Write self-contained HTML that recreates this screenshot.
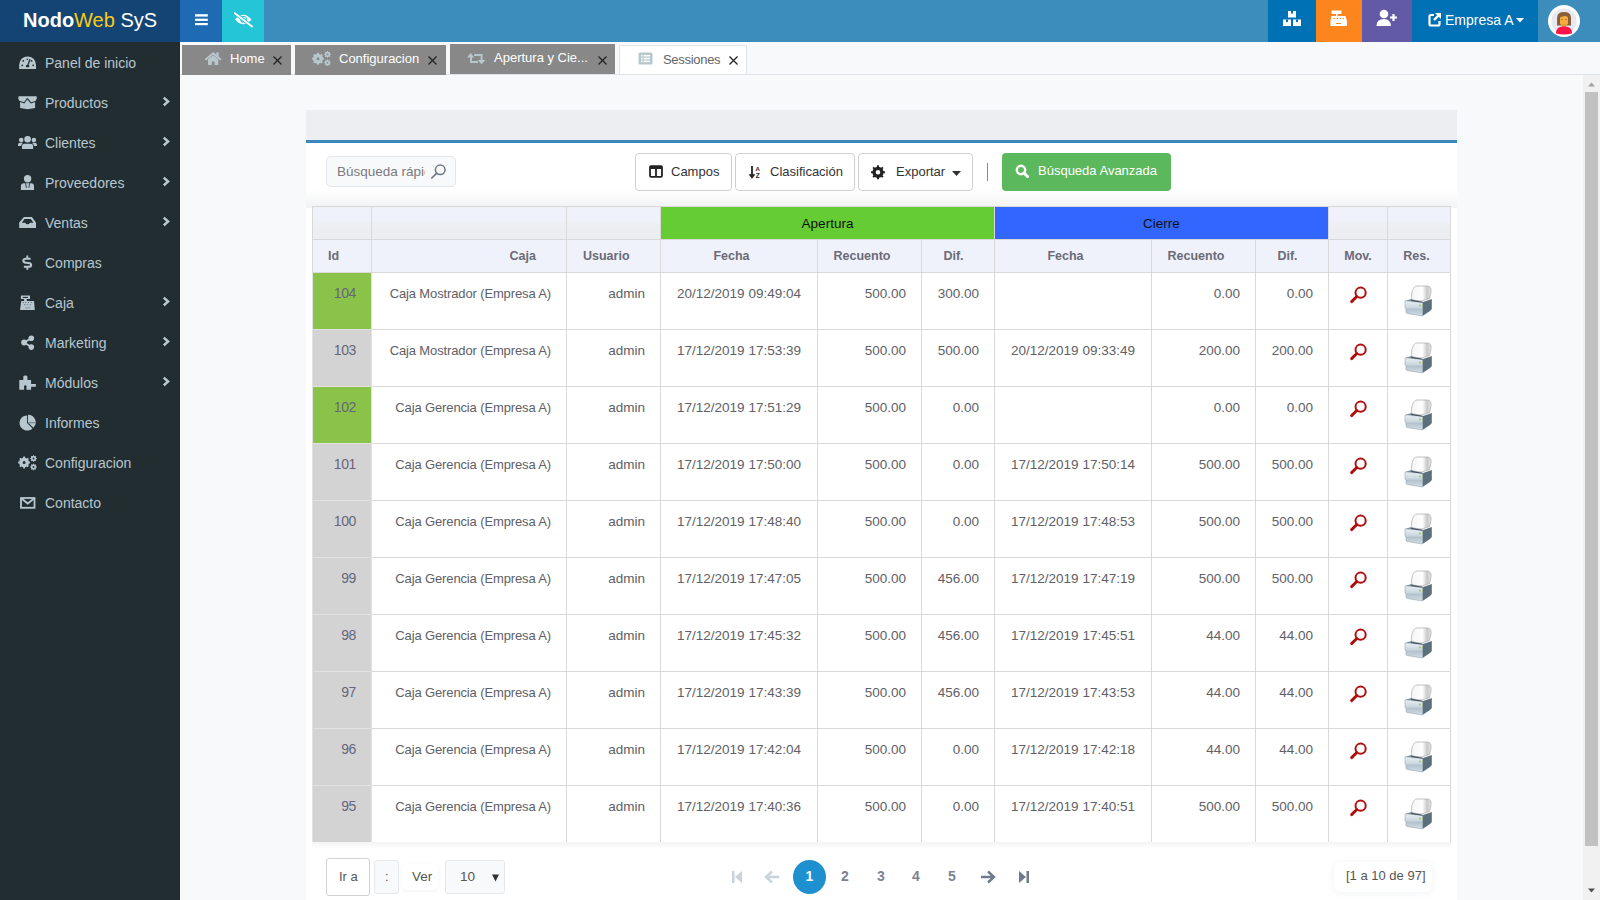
<!DOCTYPE html>
<html><head><meta charset="utf-8">
<style>
*{box-sizing:border-box;margin:0;padding:0}
html,body{width:1600px;height:900px;overflow:hidden;background:#f8f9fb;font-family:"Liberation Sans",sans-serif}
.abs{position:absolute}
#logo{left:0;top:0;width:180px;height:42px;background:#134473;color:#fff;font-size:20px;line-height:40px;padding-left:23px;white-space:nowrap}
#logo b{font-weight:bold}
#logo .w{color:#f9cb13}
#side{left:0;top:42px;width:180px;height:858px;background:#222d32}
.mi{position:absolute;left:0;width:180px;height:40px;color:#b8c7ce;font-size:14px}
.mi span{position:absolute;left:45px;top:13px;line-height:16px}
.mi svg.i{position:absolute;left:17px;top:12px}
.mi .ch{position:absolute;left:162px;top:14px}
#nav{left:180px;top:0;width:1420px;height:42px;background:#3c8dbc}
.nb{position:absolute;top:0;height:42px}
#tabs{left:180px;top:42px;width:1420px;height:33px;background:#f8f9fb;z-index:2}
.tab{position:absolute;height:30px;top:3px;background:#888;color:#fff;font-size:13px}
.tab span{position:absolute;top:6px;line-height:16px;white-space:nowrap}
.tab .x{position:absolute;top:11px}
#content{left:180px;top:74px;width:1420px;height:826px;background:#f8f9fb;border-top:1px solid #dde3ea}
#sb{left:1583px;top:75px;width:17px;height:825px;background:#f1f1f1}
#panel{left:306px;top:110px;width:1151px;height:790px;background:#fff}
#phead{left:0;top:0;width:1151px;height:33px;background:#eceef2;border-bottom:3px solid #3a89bd}
table{position:absolute;left:6px;top:96px;border-collapse:collapse;table-layout:fixed;font-size:13.5px;color:#606066}
td,th{border:1px solid #d9d9d9;padding:0}
th{height:33px;background:#eff2fa;color:#6b6b78;font-weight:bold;font-size:12.5px}
td{height:57px;vertical-align:top;padding-top:12.5px;line-height:16px;white-space:nowrap}
td.r{text-align:right;padding-right:15px}
td.caja{font-size:13px;letter-spacing:-0.13px}
td.c{text-align:center}
tr.h1 th{background:linear-gradient(to bottom,#eff2fa 0,#eff2fa 40%,#eceef2 60%,#eceef2 100%)}
td.id{text-align:right;padding-right:15px;color:#66667a;border-color:#e2e2e2;padding-top:11.5px;font-size:14px;letter-spacing:-0.4px}
td.ic{text-align:center;padding-top:12px}
.btn{position:absolute;top:43px;height:38px;border:1px solid #cfcfcf;border-radius:4px;background:#fff;color:#333;font-size:13px}
.btn span{position:absolute;top:10px;line-height:16px;white-space:nowrap}
</style></head><body>

<div id="logo" class="abs"><b>Nodo</b><span class="w">Web</span> SyS</div>
<div id="side" class="abs">
  <div class="mi" style="top:0"><svg class="i" width="20" height="18" viewBox="0 0 20 18"><path d="M2.2 15 L2.2 10.8 A8.4 8.4 0 0 1 19 10.8 L19 15 Z" fill="#b8c7ce"/><circle cx="6.3" cy="6.9" r="0.9" fill="#222d32"/><circle cx="10.3" cy="5.3" r="0.8" fill="#222d32"/><circle cx="14.6" cy="6.9" r="0.9" fill="#222d32"/><circle cx="5.3" cy="11.3" r="0.9" fill="#222d32"/><circle cx="16.2" cy="11.3" r="0.9" fill="#222d32"/><path d="M10.6 12 L13 5.2" stroke="#222d32" stroke-width="1.3"/><rect x="9" y="11" width="3.2" height="2.2" fill="#222d32"/></svg><span>Panel de inicio</span></div>
  <div class="mi" style="top:40px"><svg class="i" width="20" height="18" viewBox="0 0 20 18"><path d="M1.6 2.3 L19.6 2.3 L19.9 4.2 L18.5 7 L14.1 8.3 L10.3 3.7 L7.1 8.3 L2.2 6.8 L1.3 4.5 Z" fill="#b8c7ce"/><path d="M3 7.9 L7.3 9.4 L10.3 5.6 L13.9 9.4 L18.1 7.9 L18.1 14 L10.6 15.2 L3.2 14 Z" fill="#b8c7ce"/></svg><span>Productos</span><svg class="ch" width="8" height="11" viewBox="0 0 8 11"><path d="M1.8 1.6 L6 5.5 L1.8 9.4" fill="none" stroke="#b8c7ce" stroke-width="2.6"/></svg></div>
  <div class="mi" style="top:80px"><svg class="i" width="20" height="18" viewBox="0 0 20 18"><circle cx="10.6" cy="5.3" r="3.3" fill="#b8c7ce"/><circle cx="4.2" cy="6" r="2.3" fill="#b8c7ce"/><circle cx="16.9" cy="6" r="2.3" fill="#b8c7ce"/><path d="M5 14.9 L5 12 Q5 9.7 7.5 9.7 L13.6 9.7 Q16.1 9.7 16.1 12 L16.1 14.9 Z" fill="#b8c7ce"/><path d="M1 12 L1 10.5 Q1 8.8 3 8.8 L6 8.8 Q4.2 10 4.2 12 Z" fill="#b8c7ce"/><path d="M19.9 12 L19.9 10.5 Q19.9 8.8 17.9 8.8 L15.1 8.8 Q16.9 10 16.9 12 Z" fill="#b8c7ce"/></svg><span>Clientes</span><svg class="ch" width="8" height="11" viewBox="0 0 8 11"><path d="M1.8 1.6 L6 5.5 L1.8 9.4" fill="none" stroke="#b8c7ce" stroke-width="2.6"/></svg></div>
  <div class="mi" style="top:120px"><svg class="i" width="20" height="18" viewBox="0 0 20 18"><circle cx="10.6" cy="4.8" r="3.7" fill="#b8c7ce"/><path d="M3.9 16 L3.9 12.5 Q3.9 9.3 7 9.3 L14 9.3 Q17 9.3 17 12.5 L17 16 Z" fill="#b8c7ce"/><path d="M8.6 9.2 L9.4 13.8 M12.6 9.2 L11.8 13.8" stroke="#222d32" stroke-width="0.9"/></svg><span>Proveedores</span><svg class="ch" width="8" height="11" viewBox="0 0 8 11"><path d="M1.8 1.6 L6 5.5 L1.8 9.4" fill="none" stroke="#b8c7ce" stroke-width="2.6"/></svg></div>
  <div class="mi" style="top:160px"><svg class="i" width="20" height="18" viewBox="0 0 20 18"><path d="M6.9 2.9 L14.9 2.9 L19 8.5 L19 14.1 L2.2 14.1 L2.2 8.5 Z" fill="#b8c7ce"/><path d="M7.5 5.1 L13.8 5.1 L16.4 8.8 L13 8.8 Q12.2 10.3 10.6 10.3 Q9 10.3 8.2 8.8 L4.8 8.8 Z" fill="#222d32"/></svg><span>Ventas</span><svg class="ch" width="8" height="11" viewBox="0 0 8 11"><path d="M1.8 1.6 L6 5.5 L1.8 9.4" fill="none" stroke="#b8c7ce" stroke-width="2.6"/></svg></div>
  <div class="mi" style="top:200px"><svg class="i" width="20" height="18" viewBox="0 0 20 18"><path d="M13.6 4.7 L9 4.7 Q6.4 4.7 6.4 6.7 Q6.4 8.4 9 8.7 L11.5 9 Q14.1 9.3 14.1 11 Q14.1 12.8 11.5 12.8 L6.9 12.8" fill="none" stroke="#b8c7ce" stroke-width="2.1"/><path d="M10.3 1.5 L10.3 4.7 M10.3 12.8 L10.3 15.8" stroke="#b8c7ce" stroke-width="1.9"/></svg><span>Compras</span></div>
  <div class="mi" style="top:240px"><svg class="i" width="20" height="18" viewBox="0 0 20 18"><rect x="3.9" y="1.6" width="9.1" height="3.5" rx="0.5" fill="#b8c7ce"/><rect x="5.8" y="2.9" width="5.1" height="1.1" fill="#222d32"/><rect x="7.1" y="5" width="2.7" height="2" fill="#b8c7ce"/><path d="M4.2 6.9 L17 6.9 L17.8 16 L3.1 16 Z" fill="#b8c7ce"/><g fill="#5d6b72"><rect x="5.8" y="8" width="1" height="1"/><rect x="8.2" y="8" width="1" height="1"/><rect x="10.9" y="8" width="1" height="1"/><rect x="13.8" y="8" width="1" height="1"/><rect x="7.2" y="10.2" width="1" height="1"/><rect x="9.8" y="10.2" width="1" height="1"/><rect x="12.8" y="10.2" width="1" height="1"/></g><rect x="8.2" y="13.4" width="5.1" height="1.1" fill="#8c9ba3"/></svg><span>Caja</span><svg class="ch" width="8" height="11" viewBox="0 0 8 11"><path d="M1.8 1.6 L6 5.5 L1.8 9.4" fill="none" stroke="#b8c7ce" stroke-width="2.6"/></svg></div>
  <div class="mi" style="top:280px"><svg class="i" width="20" height="18" viewBox="0 0 20 18"><circle cx="7.1" cy="8.5" r="2.9" fill="#b8c7ce"/><circle cx="14.3" cy="4.3" r="2.8" fill="#b8c7ce"/><circle cx="14.3" cy="13.1" r="2.8" fill="#b8c7ce"/><path d="M7.1 8.5 L14.3 4.3 M7.1 8.5 L14.3 13.1" stroke="#b8c7ce" stroke-width="1.8"/></svg><span>Marketing</span><svg class="ch" width="8" height="11" viewBox="0 0 8 11"><path d="M1.8 1.6 L6 5.5 L1.8 9.4" fill="none" stroke="#b8c7ce" stroke-width="2.6"/></svg></div>
  <div class="mi" style="top:320px"><svg class="i" width="20" height="18" viewBox="0 0 20 18"><path d="M2.3 5.9 L6.3 5.9 L6.3 2.8 Q6.3 1.5 8.35 1.5 Q10.4 1.5 10.4 2.8 L10.4 5.9 L14.1 5.9 L14.1 9.9 L18.9 9.9 L18.9 12.8 L14.1 12.8 L14.1 15.7 L9.5 15.7 L9.5 12.3 Q9.5 11.2 8.3 11.2 Q7.1 11.2 7.1 12.3 L7.1 15.7 L2.3 15.7 Z" fill="#b8c7ce"/></svg><span>Módulos</span><svg class="ch" width="8" height="11" viewBox="0 0 8 11"><path d="M1.8 1.6 L6 5.5 L1.8 9.4" fill="none" stroke="#b8c7ce" stroke-width="2.6"/></svg></div>
  <div class="mi" style="top:360px"><svg class="i" width="20" height="18" viewBox="0 0 20 18"><path d="M10.1 9 L10.1 1.4 A7.6 7.6 0 1 0 15.5 14.4 Z" fill="#b8c7ce"/><path d="M11 8.4 L11 0.8 A7.6 7.6 0 0 1 16.4 13.8 Z" fill="#b8c7ce"/><rect x="11" y="8.1" width="7.6" height="1.2" fill="#7a8792"/></svg><span>Informes</span></div>
  <div class="mi" style="top:400px"><svg style="position:absolute;left:17px;top:12px" width="20" height="18" viewBox="0 0 20 18"><path fill-rule="evenodd" fill="#b8c7ce" d="M11.63 6.62 L11.91 7.54 L13.03 7.61 L13.03 9.39 L11.91 9.46 L11.63 10.38 L11.17 11.22 L11.93 12.06 L10.66 13.33 L9.82 12.57 L8.98 13.03 L8.06 13.31 L7.99 14.43 L6.21 14.43 L6.14 13.31 L5.22 13.03 L4.38 12.57 L3.54 13.33 L2.27 12.06 L3.03 11.22 L2.57 10.38 L2.29 9.46 L1.17 9.39 L1.17 7.61 L2.29 7.54 L2.57 6.62 L3.03 5.78 L2.27 4.94 L3.54 3.67 L4.38 4.43 L5.22 3.97 L6.14 3.69 L6.21 2.57 L7.99 2.57 L8.06 3.69 L8.98 3.97 L9.82 4.43 L10.66 3.67 L11.93 4.94 L11.17 5.78 Z M5.60 8.50 a1.5 1.5 0 1 0 3.0 0 a1.5 1.5 0 1 0 -3.0 0 Z M18.90 3.51 L19.05 3.99 L19.86 3.99 L19.86 5.01 L19.05 5.01 L18.90 5.49 L18.66 5.94 L19.23 6.52 L18.52 7.23 L17.94 6.66 L17.49 6.90 L17.01 7.05 L17.01 7.86 L15.99 7.86 L15.99 7.05 L15.51 6.90 L15.06 6.66 L14.48 7.23 L13.77 6.52 L14.34 5.94 L14.10 5.49 L13.95 5.01 L13.14 5.01 L13.14 3.99 L13.95 3.99 L14.10 3.51 L14.34 3.06 L13.77 2.48 L14.48 1.77 L15.06 2.34 L15.51 2.10 L15.99 1.95 L15.99 1.14 L17.01 1.14 L17.01 1.95 L17.49 2.10 L17.94 2.34 L18.52 1.77 L19.23 2.48 L18.66 3.06 Z M15.60 4.50 a0.9 0.9 0 1 0 1.8 0 a0.9 0.9 0 1 0 -1.8 0 Z M18.90 12.01 L19.05 12.49 L19.86 12.49 L19.86 13.51 L19.05 13.51 L18.90 13.99 L18.66 14.44 L19.23 15.02 L18.52 15.73 L17.94 15.16 L17.49 15.40 L17.01 15.55 L17.01 16.36 L15.99 16.36 L15.99 15.55 L15.51 15.40 L15.06 15.16 L14.48 15.73 L13.77 15.02 L14.34 14.44 L14.10 13.99 L13.95 13.51 L13.14 13.51 L13.14 12.49 L13.95 12.49 L14.10 12.01 L14.34 11.56 L13.77 10.98 L14.48 10.27 L15.06 10.84 L15.51 10.60 L15.99 10.45 L15.99 9.64 L17.01 9.64 L17.01 10.45 L17.49 10.60 L17.94 10.84 L18.52 10.27 L19.23 10.98 L18.66 11.56 Z M15.60 13.00 a0.9 0.9 0 1 0 1.8 0 a0.9 0.9 0 1 0 -1.8 0 Z"/></svg><span>Configuracion</span></div>
  <div class="mi" style="top:440px"><svg class="i" width="20" height="18" viewBox="0 0 20 18"><rect x="4" y="4" width="13.5" height="9.8" fill="none" stroke="#b8c7ce" stroke-width="1.8"/><path d="M4.5 4.5 L10.75 9.5 L17 4.5" fill="none" stroke="#b8c7ce" stroke-width="1.8"/></svg><span>Contacto</span></div>
</div>

<div id="nav" class="abs">
  <div class="nb" style="left:0;width:42px;background:#1e6bb4"><svg style="position:absolute;left:14px;top:13px" width="15" height="14" viewBox="0 0 15 14"><rect x="1" y="1.2" width="12.8" height="2.4" fill="#fff"/><rect x="1" y="5.7" width="12.8" height="2.2" fill="#fff"/><rect x="1" y="10" width="12.8" height="2.2" fill="#fff"/></svg></div>
  <div class="nb" style="left:42px;width:42px;background:#25c5d8"><svg style="position:absolute;left:12px;top:12px" width="19" height="16" viewBox="0 0 19 16"><path d="M1 7.5 Q9.2 -2 17.5 7.5 Q9.2 17 1 7.5 Z" fill="#fff"/><circle cx="9.6" cy="7.3" r="3.4" fill="#25c5d8"/><circle cx="10.2" cy="7" r="1.9" fill="#fff"/><path d="M0.8 1 L18 14.6" stroke="#25c5d8" stroke-width="3.6"/><path d="M0.8 1.2 L18 14.4" stroke="#fff" stroke-width="1.9" stroke-linecap="round"/></svg></div>
  <div class="nb" style="left:1088px;width:48px;background:#0071b5"><svg style="position:absolute;left:14px;top:10px" width="20" height="17" viewBox="0 0 20 17"><rect x="6" y="1" width="8" height="6.5" fill="#fff"/><rect x="1" y="9.5" width="8" height="6.5" fill="#fff"/><rect x="11" y="9.5" width="8" height="6.5" fill="#fff"/><rect x="9" y="1" width="2" height="2.5" fill="#0071b5"/><rect x="4" y="9.5" width="2" height="2.5" fill="#0071b5"/><rect x="14" y="9.5" width="2" height="2.5" fill="#0071b5"/></svg></div>
  <div class="nb" style="left:1136px;width:46px;background:#fd851d"><svg style="position:absolute;left:14px;top:10px" width="18" height="17" viewBox="0 0 18 17"><rect x="1.5" y="0.5" width="10" height="3.5" fill="#fff"/><rect x="6" y="4" width="1.5" height="2.5" fill="#fff"/><path d="M1.5 6 L15.5 6 L17 11 L17 16 L0.5 16 L0.5 11 Z" fill="#fff"/><rect x="3.5" y="8" width="1.5" height="1" fill="#fd851d"/><rect x="6.5" y="8" width="1.5" height="1" fill="#fd851d"/><rect x="9.5" y="8" width="1.5" height="1" fill="#fd851d"/><rect x="12.5" y="8" width="1.5" height="1" fill="#fd851d"/><rect x="6" y="13" width="5" height="1" fill="#fd851d"/></svg></div>
  <div class="nb" style="left:1182px;width:50px;background:#625aa6"><svg style="position:absolute;left:14px;top:9px" width="22" height="18" viewBox="0 0 22 18"><circle cx="8" cy="5" r="4.3" fill="#fff"/><path d="M0.5 17 Q0.5 10 8 10 Q14.5 10 15 17 Z" fill="#fff"/><path d="M17.5 5 L17.5 12 M14 8.5 L21 8.5" stroke="#fff" stroke-width="2.2"/></svg></div>
  <div class="nb" style="left:1232px;width:126px;background:#0071b5;color:#fff;font-size:14px"><svg style="position:absolute;left:16px;top:12px" width="14" height="15" viewBox="0 0 14 15"><path d="M6 3 L3 3 Q1.5 3 1.5 4.5 L1.5 12 Q1.5 13.5 3 13.5 L10 13.5 Q11.5 13.5 11.5 12 L11.5 9" fill="none" stroke="#fff" stroke-width="2.2"/><path d="M7 1 L13 1 L13 7 Z" fill="#fff"/><path d="M6 8 L11 3" stroke="#fff" stroke-width="2.4"/></svg><span style="position:absolute;left:33px;top:11.5px;line-height:17px">Empresa A</span><svg style="position:absolute;left:104px;top:18px" width="8" height="5" viewBox="0 0 8 5"><path d="M0 0 L8 0 L4 4.5 Z" fill="#fff"/></svg></div>
  <div class="nb" style="left:1368px;top:5px;width:32px;height:32px;border-radius:50%;background:#fff"><svg style="position:absolute;left:0;top:0" width="32" height="32" viewBox="0 0 32 32"><circle cx="16" cy="16" r="12.6" fill="#e8e9ee"/><path d="M9.1 20.6 L9.1 13 Q9.1 7.1 16 7.1 Q23 7.1 23 13 L23 20.6 Z" fill="#8a5d3b"/><path d="M12 12.5 Q14 11 17 10.9 Q19.5 11 20 12.5 L20 18 Q20 20.3 16 20.3 Q12 20.3 12 18 Z" fill="#f4ac3c"/><rect x="14.2" y="19.5" width="3.6" height="3" fill="#e6962e"/><circle cx="13.9" cy="14.6" r="0.7" fill="#b0603a"/><circle cx="18.1" cy="14.6" r="0.7" fill="#b0603a"/><path d="M8 28.6 Q8 22 14 21.5 L18 21.5 Q24 22 24 28.6 Q16 30.5 8 28.6 Z" fill="#ff1447"/></svg></div>
</div>

<div id="tabs" class="abs" style="height:32px">
  <div class="tab" style="left:2px;width:109px"><svg style="position:absolute;left:23px;top:7px" width="17" height="14" viewBox="0 0 17 14"><path d="M1 7.3 L8.2 1.3 L15.3 7.3" fill="none" stroke="#b8c7ce" stroke-width="1.9" stroke-linecap="round"/><path d="M3 7.3 L8.2 3.2 L13.3 7.3 L13.3 13 L9.6 13 L9.6 9.6 L6.8 9.6 L6.8 13 L3 13 Z" fill="#b8c7ce"/><rect x="11.3" y="0.4" width="2.3" height="4.5" fill="#b8c7ce"/></svg><span style="left:48px">Home</span><svg class="x" style="left:91px" width="9" height="9" viewBox="0 0 9 9"><path d="M0.5 0.5 L8.5 8.5 M8.5 0.5 L0.5 8.5" stroke="#222" stroke-width="1.3"/></svg></div>
  <div class="tab" style="left:115px;width:151px"><svg style="position:absolute;left:16px;top:5px" width="20" height="16" viewBox="0 0 20 16"><path fill-rule="evenodd" fill="#b8c7ce" d="M11.53 6.82 L11.81 7.74 L12.93 7.81 L12.93 9.59 L11.81 9.66 L11.53 10.58 L11.07 11.42 L11.83 12.26 L10.56 13.53 L9.72 12.77 L8.88 13.23 L7.96 13.51 L7.89 14.63 L6.11 14.63 L6.04 13.51 L5.12 13.23 L4.28 12.77 L3.44 13.53 L2.17 12.26 L2.93 11.42 L2.47 10.58 L2.19 9.66 L1.07 9.59 L1.07 7.81 L2.19 7.74 L2.47 6.82 L2.93 5.98 L2.17 5.14 L3.44 3.87 L4.28 4.63 L5.12 4.17 L6.04 3.89 L6.11 2.77 L7.89 2.77 L7.96 3.89 L8.88 4.17 L9.72 4.63 L10.56 3.87 L11.83 5.14 L11.07 5.98 Z M5.50 8.70 a1.5 1.5 0 1 0 3.0 0 a1.5 1.5 0 1 0 -3.0 0 Z M18.90 3.41 L19.05 3.89 L19.86 3.89 L19.86 4.91 L19.05 4.91 L18.90 5.39 L18.66 5.84 L19.23 6.42 L18.52 7.13 L17.94 6.56 L17.49 6.80 L17.01 6.95 L17.01 7.76 L15.99 7.76 L15.99 6.95 L15.51 6.80 L15.06 6.56 L14.48 7.13 L13.77 6.42 L14.34 5.84 L14.10 5.39 L13.95 4.91 L13.14 4.91 L13.14 3.89 L13.95 3.89 L14.10 3.41 L14.34 2.96 L13.77 2.38 L14.48 1.67 L15.06 2.24 L15.51 2.00 L15.99 1.85 L15.99 1.04 L17.01 1.04 L17.01 1.85 L17.49 2.00 L17.94 2.24 L18.52 1.67 L19.23 2.38 L18.66 2.96 Z M15.60 4.40 a0.9 0.9 0 1 0 1.8 0 a0.9 0.9 0 1 0 -1.8 0 Z M18.90 11.81 L19.05 12.29 L19.86 12.29 L19.86 13.31 L19.05 13.31 L18.90 13.79 L18.66 14.24 L19.23 14.82 L18.52 15.53 L17.94 14.96 L17.49 15.20 L17.01 15.35 L17.01 16.16 L15.99 16.16 L15.99 15.35 L15.51 15.20 L15.06 14.96 L14.48 15.53 L13.77 14.82 L14.34 14.24 L14.10 13.79 L13.95 13.31 L13.14 13.31 L13.14 12.29 L13.95 12.29 L14.10 11.81 L14.34 11.36 L13.77 10.78 L14.48 10.07 L15.06 10.64 L15.51 10.40 L15.99 10.25 L15.99 9.44 L17.01 9.44 L17.01 10.25 L17.49 10.40 L17.94 10.64 L18.52 10.07 L19.23 10.78 L18.66 11.36 Z M15.60 12.80 a0.9 0.9 0 1 0 1.8 0 a0.9 0.9 0 1 0 -1.8 0 Z"/></svg><span style="left:44px">Configuracion</span><svg class="x" style="left:133px" width="9" height="9" viewBox="0 0 9 9"><path d="M0.5 0.5 L8.5 8.5 M8.5 0.5 L0.5 8.5" stroke="#222" stroke-width="1.3"/></svg></div>
  <div class="tab" style="left:270px;width:165px;top:2px;height:30px"><svg style="position:absolute;left:17px;top:8px" width="20" height="14" viewBox="0 0 20 14"><path d="M0 5.4 L7.3 5.4 L3.65 0.9 Z" fill="#b8c7ce"/><path d="M4 5 L4 10 L11 10" fill="none" stroke="#b8c7ce" stroke-width="1.9"/><path d="M7.2 3 L14.6 3 L14.6 8.5" fill="none" stroke="#b8c7ce" stroke-width="1.9"/><path d="M10.7 8.1 L18.5 8.1 L14.6 12.2 Z" fill="#b8c7ce"/></svg><span style="left:44px">Apertura y Cie...</span><svg class="x" style="left:148px;top:12px" width="9" height="9" viewBox="0 0 9 9"><path d="M0.5 0.5 L8.5 8.5 M8.5 0.5 L0.5 8.5" stroke="#222" stroke-width="1.3"/></svg></div>
  <div class="tab" style="left:439px;width:128px;background:#fff;border:1px solid #e1e5ea;border-bottom:none;color:#666;height:29px"><svg style="position:absolute;left:18px;top:6px" width="15" height="13" viewBox="0 0 15 13"><rect x="0.5" y="0.5" width="14" height="12" rx="1.5" fill="#b8c7ce"/><rect x="3" y="3" width="1.5" height="1.5" fill="#fff"/><rect x="3" y="5.8" width="1.5" height="1.5" fill="#fff"/><rect x="3" y="8.6" width="1.5" height="1.5" fill="#fff"/><rect x="5.5" y="3" width="6.5" height="1.5" fill="#fff"/><rect x="5.5" y="5.8" width="6.5" height="1.5" fill="#fff"/><rect x="5.5" y="8.6" width="6.5" height="1.5" fill="#fff"/></svg><span style="left:43px;top:6px;letter-spacing:-0.3px">Sessiones</span><svg class="x" style="left:109px;top:10px" width="9" height="9" viewBox="0 0 9 9"><path d="M0.5 0.5 L8.5 8.5 M8.5 0.5 L0.5 8.5" stroke="#222" stroke-width="1.3"/></svg></div>
</div>

<div id="content" class="abs"></div>
<div id="sb" class="abs">
  <svg style="position:absolute;left:4px;top:6px" width="10" height="6" viewBox="0 0 10 6"><path d="M1 5.5 L4.5 1.5 L8 5.5 Z" fill="#a3a3a3"/></svg>
  <div style="position:absolute;left:2px;top:17px;width:13px;height:754px;background:#c1c1c1"></div>
  <svg style="position:absolute;left:4px;top:813px" width="10" height="6" viewBox="0 0 10 6"><path d="M1 0.5 L8 0.5 L4.5 4.5 Z" fill="#505050"/></svg>
</div>

<div id="panel" class="abs">
  <div id="phead" class="abs"></div>
  <div class="abs" style="left:0;top:80px;width:1151px;height:18px;background:linear-gradient(to bottom,#ffffff,#f1f2f4)"></div>
  <!-- toolbar -->
  <div class="abs" style="left:20px;top:46px;width:130px;height:31px;border:1px solid #e3e6ec;border-radius:5px;background:#f8f9fb;color:#7a7a80;font-size:13.5px"><span style="position:absolute;left:10px;top:7px;line-height:16px;white-space:nowrap;width:88px;overflow:hidden">Búsqueda rápida</span><svg style="position:absolute;left:103px;top:6px" width="17" height="17" viewBox="0 0 17 17"><circle cx="10.2" cy="6.8" r="4.8" fill="none" stroke="#6c7886" stroke-width="1.5"/><path d="M6.8 10.2 L1.8 15" stroke="#6c7886" stroke-width="1.7" stroke-linecap="round"/></svg></div>
  <div class="btn" style="left:329px;width:97px"><svg style="position:absolute;left:13px;top:11px" width="14" height="13" viewBox="0 0 14 13"><rect x="1" y="1.2" width="12" height="10.6" rx="1" fill="none" stroke="#222" stroke-width="1.8"/><rect x="1" y="1" width="12" height="3" fill="#222"/><rect x="6.1" y="2" width="1.8" height="9.5" fill="#222"/></svg><span style="left:35px">Campos</span></div>
  <div class="btn" style="left:429px;width:120px"><svg style="position:absolute;left:12px;top:10px" width="14" height="16" viewBox="0 0 14 16"><path d="M4 2 L4 12.8" stroke="#222" stroke-width="1.8"/><path d="M1.6 10.2 L4 13.3 L6.4 10.2" fill="none" stroke="#222" stroke-width="1.8"/><text x="7.6" y="7.3" font-size="6" font-weight="bold" fill="#222" font-family="Liberation Sans">A</text><text x="7.8" y="13.6" font-size="6.5" font-weight="bold" fill="#222" font-family="Liberation Sans">Z</text></svg><span style="left:34px">Clasificación</span></div>
  <div class="btn" style="left:552px;width:115px"><svg style="position:absolute;left:11px;top:10px" width="16" height="17" viewBox="0 0 16 17"><path fill-rule="evenodd" fill="#222" d="M13.17 6.16 L13.51 7.32 L14.94 7.36 L14.94 9.24 L13.51 9.28 L13.17 10.44 L12.59 11.50 L13.57 12.54 L12.24 13.87 L11.20 12.89 L10.14 13.47 L8.98 13.81 L8.94 15.24 L7.06 15.24 L7.02 13.81 L5.86 13.47 L4.80 12.89 L3.76 13.87 L2.43 12.54 L3.41 11.50 L2.83 10.44 L2.49 9.28 L1.06 9.24 L1.06 7.36 L2.49 7.32 L2.83 6.16 L3.41 5.10 L2.43 4.06 L3.76 2.73 L4.80 3.71 L5.86 3.13 L7.02 2.79 L7.06 1.36 L8.94 1.36 L8.98 2.79 L10.14 3.13 L11.20 3.71 L12.24 2.73 L13.57 4.06 L12.59 5.10 Z M5.70 8.30 a2.3 2.3 0 1 0 4.6 0 a2.3 2.3 0 1 0 -4.6 0 Z"/></svg><span style="left:37px">Exportar</span><svg style="position:absolute;left:93px;top:17px" width="9" height="5" viewBox="0 0 9 5"><path d="M0 0 L9 0 L4.5 5 Z" fill="#333"/></svg></div>
  <div class="abs" style="left:681px;top:53px;width:1px;height:18px;background:#888"></div>
  <div class="abs" style="left:696px;top:43px;width:169px;height:38px;background:#5cb85c;border-radius:4px;color:#fff;font-size:13px"><svg style="position:absolute;left:13px;top:11px" width="14" height="14" viewBox="0 0 14 14"><circle cx="6" cy="6" r="4.2" fill="none" stroke="#fff" stroke-width="2.4"/><path d="M9 9 L12.5 12.5" stroke="#fff" stroke-width="3" stroke-linecap="round"/></svg><span style="position:absolute;left:36px;top:10px;line-height:16px;white-space:nowrap">Búsqueda Avanzada</span></div>

  <table>
  <colgroup><col style="width:59px"><col style="width:195px"><col style="width:94px"><col style="width:157px"><col style="width:104px"><col style="width:73px"><col style="width:157px"><col style="width:104px"><col style="width:73px"><col style="width:59px"><col style="width:63px"></colgroup>
  <tr class="h1"><th></th><th></th><th></th><th colspan="3" style="background:#66cc33;color:#111;font-weight:normal;font-size:13.5px;border-color:#d9d9d9">Apertura</th><th colspan="3" style="background:#3366ff;color:#111;font-weight:normal;font-size:13.5px;border-color:#d9d9d9">Cierre</th><th></th><th></th></tr>
  <tr><th style="text-align:left;padding-left:15px">Id</th><th style="text-align:right;padding-right:30px">Caja</th><th style="text-align:left;padding-left:16px">Usuario</th><th style="padding-right:15px">Fecha</th><th style="padding-right:15px">Recuento</th><th style="padding-right:9px">Dif.</th><th style="padding-right:15px">Fecha</th><th style="padding-right:15px">Recuento</th><th style="padding-right:9px">Dif.</th><th>Mov.</th><th style="padding-right:5px">Res.</th></tr>
  <tr><td class="id" style="background:#8bc34a">104</td><td class="r caja">Caja Mostrador (Empresa A)</td><td class="r">admin</td><td class="c">20/12/2019 09:49:04</td><td class="r">500.00</td><td class="r">300.00</td><td class="c"></td><td class="r">0.00</td><td class="r">0.00</td><td class="ic"><svg class="mov" width="20" height="20" viewBox="0 0 20 20"><circle cx="12.6" cy="7.7" r="5.1" fill="none" stroke="#b00d0d" stroke-width="2"/><path d="M8.8 11.5 L3.6 16.6" stroke="#b00d0d" stroke-width="2.9" stroke-linecap="round"/></svg></td><td class="ic"><svg class="prn" width="30" height="34" viewBox="0 0 30 34">
<defs>
<linearGradient id="pp" x1="0" y1="0" x2="1" y2="0"><stop offset="0" stop-color="#f4f4f4"/><stop offset="0.55" stop-color="#ffffff"/><stop offset="0.8" stop-color="#c8c8c8"/><stop offset="1" stop-color="#e6e6e6"/></linearGradient>
<linearGradient id="pf" x1="0" y1="0" x2="0" y2="1"><stop offset="0" stop-color="#e9eff4"/><stop offset="0.45" stop-color="#c9d6df"/><stop offset="0.55" stop-color="#b3c2cd"/><stop offset="1" stop-color="#d3dee6"/></linearGradient>
</defs>
<path d="M7.5 15 C7 8 9 1 13 1 L23 1 C26.5 1 27.8 4 26.8 8 L25.5 13.5 L18 16 Z" fill="url(#pp)" stroke="#a9a9a9" stroke-width="0.7"/>
<path d="M1 16 L7 14 L18.5 17.3 Z" fill="#7f93a1"/>
<path d="M18.5 17.3 L27.8 14 L27.8 24 L26 26 L18.5 31 Z" fill="#5b6f7d"/>
<path d="M1 16 L18.5 17.3 L18.5 31 L3 28.5 Q2 28.2 2 27 L2 24 L1 23 Z" fill="url(#pf)" stroke="#8a9ba7" stroke-width="0.5"/>
<path d="M7 15.5 L18.5 17.3" stroke="#3f4d57" stroke-width="1.1"/>
<circle cx="16" cy="20.5" r="1" fill="#9bd43c"/>
</svg></td></tr>
<tr><td class="id" style="background:#d3d3d3">103</td><td class="r caja">Caja Mostrador (Empresa A)</td><td class="r">admin</td><td class="c">17/12/2019 17:53:39</td><td class="r">500.00</td><td class="r">500.00</td><td class="c">20/12/2019 09:33:49</td><td class="r">200.00</td><td class="r">200.00</td><td class="ic"><svg class="mov" width="20" height="20" viewBox="0 0 20 20"><circle cx="12.6" cy="7.7" r="5.1" fill="none" stroke="#b00d0d" stroke-width="2"/><path d="M8.8 11.5 L3.6 16.6" stroke="#b00d0d" stroke-width="2.9" stroke-linecap="round"/></svg></td><td class="ic"><svg class="prn" width="30" height="34" viewBox="0 0 30 34">
<defs>
<linearGradient id="pp" x1="0" y1="0" x2="1" y2="0"><stop offset="0" stop-color="#f4f4f4"/><stop offset="0.55" stop-color="#ffffff"/><stop offset="0.8" stop-color="#c8c8c8"/><stop offset="1" stop-color="#e6e6e6"/></linearGradient>
<linearGradient id="pf" x1="0" y1="0" x2="0" y2="1"><stop offset="0" stop-color="#e9eff4"/><stop offset="0.45" stop-color="#c9d6df"/><stop offset="0.55" stop-color="#b3c2cd"/><stop offset="1" stop-color="#d3dee6"/></linearGradient>
</defs>
<path d="M7.5 15 C7 8 9 1 13 1 L23 1 C26.5 1 27.8 4 26.8 8 L25.5 13.5 L18 16 Z" fill="url(#pp)" stroke="#a9a9a9" stroke-width="0.7"/>
<path d="M1 16 L7 14 L18.5 17.3 Z" fill="#7f93a1"/>
<path d="M18.5 17.3 L27.8 14 L27.8 24 L26 26 L18.5 31 Z" fill="#5b6f7d"/>
<path d="M1 16 L18.5 17.3 L18.5 31 L3 28.5 Q2 28.2 2 27 L2 24 L1 23 Z" fill="url(#pf)" stroke="#8a9ba7" stroke-width="0.5"/>
<path d="M7 15.5 L18.5 17.3" stroke="#3f4d57" stroke-width="1.1"/>
<circle cx="16" cy="20.5" r="1" fill="#9bd43c"/>
</svg></td></tr>
<tr><td class="id" style="background:#8bc34a">102</td><td class="r caja">Caja Gerencia (Empresa A)</td><td class="r">admin</td><td class="c">17/12/2019 17:51:29</td><td class="r">500.00</td><td class="r">0.00</td><td class="c"></td><td class="r">0.00</td><td class="r">0.00</td><td class="ic"><svg class="mov" width="20" height="20" viewBox="0 0 20 20"><circle cx="12.6" cy="7.7" r="5.1" fill="none" stroke="#b00d0d" stroke-width="2"/><path d="M8.8 11.5 L3.6 16.6" stroke="#b00d0d" stroke-width="2.9" stroke-linecap="round"/></svg></td><td class="ic"><svg class="prn" width="30" height="34" viewBox="0 0 30 34">
<defs>
<linearGradient id="pp" x1="0" y1="0" x2="1" y2="0"><stop offset="0" stop-color="#f4f4f4"/><stop offset="0.55" stop-color="#ffffff"/><stop offset="0.8" stop-color="#c8c8c8"/><stop offset="1" stop-color="#e6e6e6"/></linearGradient>
<linearGradient id="pf" x1="0" y1="0" x2="0" y2="1"><stop offset="0" stop-color="#e9eff4"/><stop offset="0.45" stop-color="#c9d6df"/><stop offset="0.55" stop-color="#b3c2cd"/><stop offset="1" stop-color="#d3dee6"/></linearGradient>
</defs>
<path d="M7.5 15 C7 8 9 1 13 1 L23 1 C26.5 1 27.8 4 26.8 8 L25.5 13.5 L18 16 Z" fill="url(#pp)" stroke="#a9a9a9" stroke-width="0.7"/>
<path d="M1 16 L7 14 L18.5 17.3 Z" fill="#7f93a1"/>
<path d="M18.5 17.3 L27.8 14 L27.8 24 L26 26 L18.5 31 Z" fill="#5b6f7d"/>
<path d="M1 16 L18.5 17.3 L18.5 31 L3 28.5 Q2 28.2 2 27 L2 24 L1 23 Z" fill="url(#pf)" stroke="#8a9ba7" stroke-width="0.5"/>
<path d="M7 15.5 L18.5 17.3" stroke="#3f4d57" stroke-width="1.1"/>
<circle cx="16" cy="20.5" r="1" fill="#9bd43c"/>
</svg></td></tr>
<tr><td class="id" style="background:#d3d3d3">101</td><td class="r caja">Caja Gerencia (Empresa A)</td><td class="r">admin</td><td class="c">17/12/2019 17:50:00</td><td class="r">500.00</td><td class="r">0.00</td><td class="c">17/12/2019 17:50:14</td><td class="r">500.00</td><td class="r">500.00</td><td class="ic"><svg class="mov" width="20" height="20" viewBox="0 0 20 20"><circle cx="12.6" cy="7.7" r="5.1" fill="none" stroke="#b00d0d" stroke-width="2"/><path d="M8.8 11.5 L3.6 16.6" stroke="#b00d0d" stroke-width="2.9" stroke-linecap="round"/></svg></td><td class="ic"><svg class="prn" width="30" height="34" viewBox="0 0 30 34">
<defs>
<linearGradient id="pp" x1="0" y1="0" x2="1" y2="0"><stop offset="0" stop-color="#f4f4f4"/><stop offset="0.55" stop-color="#ffffff"/><stop offset="0.8" stop-color="#c8c8c8"/><stop offset="1" stop-color="#e6e6e6"/></linearGradient>
<linearGradient id="pf" x1="0" y1="0" x2="0" y2="1"><stop offset="0" stop-color="#e9eff4"/><stop offset="0.45" stop-color="#c9d6df"/><stop offset="0.55" stop-color="#b3c2cd"/><stop offset="1" stop-color="#d3dee6"/></linearGradient>
</defs>
<path d="M7.5 15 C7 8 9 1 13 1 L23 1 C26.5 1 27.8 4 26.8 8 L25.5 13.5 L18 16 Z" fill="url(#pp)" stroke="#a9a9a9" stroke-width="0.7"/>
<path d="M1 16 L7 14 L18.5 17.3 Z" fill="#7f93a1"/>
<path d="M18.5 17.3 L27.8 14 L27.8 24 L26 26 L18.5 31 Z" fill="#5b6f7d"/>
<path d="M1 16 L18.5 17.3 L18.5 31 L3 28.5 Q2 28.2 2 27 L2 24 L1 23 Z" fill="url(#pf)" stroke="#8a9ba7" stroke-width="0.5"/>
<path d="M7 15.5 L18.5 17.3" stroke="#3f4d57" stroke-width="1.1"/>
<circle cx="16" cy="20.5" r="1" fill="#9bd43c"/>
</svg></td></tr>
<tr><td class="id" style="background:#d3d3d3">100</td><td class="r caja">Caja Gerencia (Empresa A)</td><td class="r">admin</td><td class="c">17/12/2019 17:48:40</td><td class="r">500.00</td><td class="r">0.00</td><td class="c">17/12/2019 17:48:53</td><td class="r">500.00</td><td class="r">500.00</td><td class="ic"><svg class="mov" width="20" height="20" viewBox="0 0 20 20"><circle cx="12.6" cy="7.7" r="5.1" fill="none" stroke="#b00d0d" stroke-width="2"/><path d="M8.8 11.5 L3.6 16.6" stroke="#b00d0d" stroke-width="2.9" stroke-linecap="round"/></svg></td><td class="ic"><svg class="prn" width="30" height="34" viewBox="0 0 30 34">
<defs>
<linearGradient id="pp" x1="0" y1="0" x2="1" y2="0"><stop offset="0" stop-color="#f4f4f4"/><stop offset="0.55" stop-color="#ffffff"/><stop offset="0.8" stop-color="#c8c8c8"/><stop offset="1" stop-color="#e6e6e6"/></linearGradient>
<linearGradient id="pf" x1="0" y1="0" x2="0" y2="1"><stop offset="0" stop-color="#e9eff4"/><stop offset="0.45" stop-color="#c9d6df"/><stop offset="0.55" stop-color="#b3c2cd"/><stop offset="1" stop-color="#d3dee6"/></linearGradient>
</defs>
<path d="M7.5 15 C7 8 9 1 13 1 L23 1 C26.5 1 27.8 4 26.8 8 L25.5 13.5 L18 16 Z" fill="url(#pp)" stroke="#a9a9a9" stroke-width="0.7"/>
<path d="M1 16 L7 14 L18.5 17.3 Z" fill="#7f93a1"/>
<path d="M18.5 17.3 L27.8 14 L27.8 24 L26 26 L18.5 31 Z" fill="#5b6f7d"/>
<path d="M1 16 L18.5 17.3 L18.5 31 L3 28.5 Q2 28.2 2 27 L2 24 L1 23 Z" fill="url(#pf)" stroke="#8a9ba7" stroke-width="0.5"/>
<path d="M7 15.5 L18.5 17.3" stroke="#3f4d57" stroke-width="1.1"/>
<circle cx="16" cy="20.5" r="1" fill="#9bd43c"/>
</svg></td></tr>
<tr><td class="id" style="background:#d3d3d3">99</td><td class="r caja">Caja Gerencia (Empresa A)</td><td class="r">admin</td><td class="c">17/12/2019 17:47:05</td><td class="r">500.00</td><td class="r">456.00</td><td class="c">17/12/2019 17:47:19</td><td class="r">500.00</td><td class="r">500.00</td><td class="ic"><svg class="mov" width="20" height="20" viewBox="0 0 20 20"><circle cx="12.6" cy="7.7" r="5.1" fill="none" stroke="#b00d0d" stroke-width="2"/><path d="M8.8 11.5 L3.6 16.6" stroke="#b00d0d" stroke-width="2.9" stroke-linecap="round"/></svg></td><td class="ic"><svg class="prn" width="30" height="34" viewBox="0 0 30 34">
<defs>
<linearGradient id="pp" x1="0" y1="0" x2="1" y2="0"><stop offset="0" stop-color="#f4f4f4"/><stop offset="0.55" stop-color="#ffffff"/><stop offset="0.8" stop-color="#c8c8c8"/><stop offset="1" stop-color="#e6e6e6"/></linearGradient>
<linearGradient id="pf" x1="0" y1="0" x2="0" y2="1"><stop offset="0" stop-color="#e9eff4"/><stop offset="0.45" stop-color="#c9d6df"/><stop offset="0.55" stop-color="#b3c2cd"/><stop offset="1" stop-color="#d3dee6"/></linearGradient>
</defs>
<path d="M7.5 15 C7 8 9 1 13 1 L23 1 C26.5 1 27.8 4 26.8 8 L25.5 13.5 L18 16 Z" fill="url(#pp)" stroke="#a9a9a9" stroke-width="0.7"/>
<path d="M1 16 L7 14 L18.5 17.3 Z" fill="#7f93a1"/>
<path d="M18.5 17.3 L27.8 14 L27.8 24 L26 26 L18.5 31 Z" fill="#5b6f7d"/>
<path d="M1 16 L18.5 17.3 L18.5 31 L3 28.5 Q2 28.2 2 27 L2 24 L1 23 Z" fill="url(#pf)" stroke="#8a9ba7" stroke-width="0.5"/>
<path d="M7 15.5 L18.5 17.3" stroke="#3f4d57" stroke-width="1.1"/>
<circle cx="16" cy="20.5" r="1" fill="#9bd43c"/>
</svg></td></tr>
<tr><td class="id" style="background:#d3d3d3">98</td><td class="r caja">Caja Gerencia (Empresa A)</td><td class="r">admin</td><td class="c">17/12/2019 17:45:32</td><td class="r">500.00</td><td class="r">456.00</td><td class="c">17/12/2019 17:45:51</td><td class="r">44.00</td><td class="r">44.00</td><td class="ic"><svg class="mov" width="20" height="20" viewBox="0 0 20 20"><circle cx="12.6" cy="7.7" r="5.1" fill="none" stroke="#b00d0d" stroke-width="2"/><path d="M8.8 11.5 L3.6 16.6" stroke="#b00d0d" stroke-width="2.9" stroke-linecap="round"/></svg></td><td class="ic"><svg class="prn" width="30" height="34" viewBox="0 0 30 34">
<defs>
<linearGradient id="pp" x1="0" y1="0" x2="1" y2="0"><stop offset="0" stop-color="#f4f4f4"/><stop offset="0.55" stop-color="#ffffff"/><stop offset="0.8" stop-color="#c8c8c8"/><stop offset="1" stop-color="#e6e6e6"/></linearGradient>
<linearGradient id="pf" x1="0" y1="0" x2="0" y2="1"><stop offset="0" stop-color="#e9eff4"/><stop offset="0.45" stop-color="#c9d6df"/><stop offset="0.55" stop-color="#b3c2cd"/><stop offset="1" stop-color="#d3dee6"/></linearGradient>
</defs>
<path d="M7.5 15 C7 8 9 1 13 1 L23 1 C26.5 1 27.8 4 26.8 8 L25.5 13.5 L18 16 Z" fill="url(#pp)" stroke="#a9a9a9" stroke-width="0.7"/>
<path d="M1 16 L7 14 L18.5 17.3 Z" fill="#7f93a1"/>
<path d="M18.5 17.3 L27.8 14 L27.8 24 L26 26 L18.5 31 Z" fill="#5b6f7d"/>
<path d="M1 16 L18.5 17.3 L18.5 31 L3 28.5 Q2 28.2 2 27 L2 24 L1 23 Z" fill="url(#pf)" stroke="#8a9ba7" stroke-width="0.5"/>
<path d="M7 15.5 L18.5 17.3" stroke="#3f4d57" stroke-width="1.1"/>
<circle cx="16" cy="20.5" r="1" fill="#9bd43c"/>
</svg></td></tr>
<tr><td class="id" style="background:#d3d3d3">97</td><td class="r caja">Caja Gerencia (Empresa A)</td><td class="r">admin</td><td class="c">17/12/2019 17:43:39</td><td class="r">500.00</td><td class="r">456.00</td><td class="c">17/12/2019 17:43:53</td><td class="r">44.00</td><td class="r">44.00</td><td class="ic"><svg class="mov" width="20" height="20" viewBox="0 0 20 20"><circle cx="12.6" cy="7.7" r="5.1" fill="none" stroke="#b00d0d" stroke-width="2"/><path d="M8.8 11.5 L3.6 16.6" stroke="#b00d0d" stroke-width="2.9" stroke-linecap="round"/></svg></td><td class="ic"><svg class="prn" width="30" height="34" viewBox="0 0 30 34">
<defs>
<linearGradient id="pp" x1="0" y1="0" x2="1" y2="0"><stop offset="0" stop-color="#f4f4f4"/><stop offset="0.55" stop-color="#ffffff"/><stop offset="0.8" stop-color="#c8c8c8"/><stop offset="1" stop-color="#e6e6e6"/></linearGradient>
<linearGradient id="pf" x1="0" y1="0" x2="0" y2="1"><stop offset="0" stop-color="#e9eff4"/><stop offset="0.45" stop-color="#c9d6df"/><stop offset="0.55" stop-color="#b3c2cd"/><stop offset="1" stop-color="#d3dee6"/></linearGradient>
</defs>
<path d="M7.5 15 C7 8 9 1 13 1 L23 1 C26.5 1 27.8 4 26.8 8 L25.5 13.5 L18 16 Z" fill="url(#pp)" stroke="#a9a9a9" stroke-width="0.7"/>
<path d="M1 16 L7 14 L18.5 17.3 Z" fill="#7f93a1"/>
<path d="M18.5 17.3 L27.8 14 L27.8 24 L26 26 L18.5 31 Z" fill="#5b6f7d"/>
<path d="M1 16 L18.5 17.3 L18.5 31 L3 28.5 Q2 28.2 2 27 L2 24 L1 23 Z" fill="url(#pf)" stroke="#8a9ba7" stroke-width="0.5"/>
<path d="M7 15.5 L18.5 17.3" stroke="#3f4d57" stroke-width="1.1"/>
<circle cx="16" cy="20.5" r="1" fill="#9bd43c"/>
</svg></td></tr>
<tr><td class="id" style="background:#d3d3d3">96</td><td class="r caja">Caja Gerencia (Empresa A)</td><td class="r">admin</td><td class="c">17/12/2019 17:42:04</td><td class="r">500.00</td><td class="r">0.00</td><td class="c">17/12/2019 17:42:18</td><td class="r">44.00</td><td class="r">44.00</td><td class="ic"><svg class="mov" width="20" height="20" viewBox="0 0 20 20"><circle cx="12.6" cy="7.7" r="5.1" fill="none" stroke="#b00d0d" stroke-width="2"/><path d="M8.8 11.5 L3.6 16.6" stroke="#b00d0d" stroke-width="2.9" stroke-linecap="round"/></svg></td><td class="ic"><svg class="prn" width="30" height="34" viewBox="0 0 30 34">
<defs>
<linearGradient id="pp" x1="0" y1="0" x2="1" y2="0"><stop offset="0" stop-color="#f4f4f4"/><stop offset="0.55" stop-color="#ffffff"/><stop offset="0.8" stop-color="#c8c8c8"/><stop offset="1" stop-color="#e6e6e6"/></linearGradient>
<linearGradient id="pf" x1="0" y1="0" x2="0" y2="1"><stop offset="0" stop-color="#e9eff4"/><stop offset="0.45" stop-color="#c9d6df"/><stop offset="0.55" stop-color="#b3c2cd"/><stop offset="1" stop-color="#d3dee6"/></linearGradient>
</defs>
<path d="M7.5 15 C7 8 9 1 13 1 L23 1 C26.5 1 27.8 4 26.8 8 L25.5 13.5 L18 16 Z" fill="url(#pp)" stroke="#a9a9a9" stroke-width="0.7"/>
<path d="M1 16 L7 14 L18.5 17.3 Z" fill="#7f93a1"/>
<path d="M18.5 17.3 L27.8 14 L27.8 24 L26 26 L18.5 31 Z" fill="#5b6f7d"/>
<path d="M1 16 L18.5 17.3 L18.5 31 L3 28.5 Q2 28.2 2 27 L2 24 L1 23 Z" fill="url(#pf)" stroke="#8a9ba7" stroke-width="0.5"/>
<path d="M7 15.5 L18.5 17.3" stroke="#3f4d57" stroke-width="1.1"/>
<circle cx="16" cy="20.5" r="1" fill="#9bd43c"/>
</svg></td></tr>
<tr><td class="id" style="background:#d3d3d3">95</td><td class="r caja">Caja Gerencia (Empresa A)</td><td class="r">admin</td><td class="c">17/12/2019 17:40:36</td><td class="r">500.00</td><td class="r">0.00</td><td class="c">17/12/2019 17:40:51</td><td class="r">500.00</td><td class="r">500.00</td><td class="ic"><svg class="mov" width="20" height="20" viewBox="0 0 20 20"><circle cx="12.6" cy="7.7" r="5.1" fill="none" stroke="#b00d0d" stroke-width="2"/><path d="M8.8 11.5 L3.6 16.6" stroke="#b00d0d" stroke-width="2.9" stroke-linecap="round"/></svg></td><td class="ic"><svg class="prn" width="30" height="34" viewBox="0 0 30 34">
<defs>
<linearGradient id="pp" x1="0" y1="0" x2="1" y2="0"><stop offset="0" stop-color="#f4f4f4"/><stop offset="0.55" stop-color="#ffffff"/><stop offset="0.8" stop-color="#c8c8c8"/><stop offset="1" stop-color="#e6e6e6"/></linearGradient>
<linearGradient id="pf" x1="0" y1="0" x2="0" y2="1"><stop offset="0" stop-color="#e9eff4"/><stop offset="0.45" stop-color="#c9d6df"/><stop offset="0.55" stop-color="#b3c2cd"/><stop offset="1" stop-color="#d3dee6"/></linearGradient>
</defs>
<path d="M7.5 15 C7 8 9 1 13 1 L23 1 C26.5 1 27.8 4 26.8 8 L25.5 13.5 L18 16 Z" fill="url(#pp)" stroke="#a9a9a9" stroke-width="0.7"/>
<path d="M1 16 L7 14 L18.5 17.3 Z" fill="#7f93a1"/>
<path d="M18.5 17.3 L27.8 14 L27.8 24 L26 26 L18.5 31 Z" fill="#5b6f7d"/>
<path d="M1 16 L18.5 17.3 L18.5 31 L3 28.5 Q2 28.2 2 27 L2 24 L1 23 Z" fill="url(#pf)" stroke="#8a9ba7" stroke-width="0.5"/>
<path d="M7 15.5 L18.5 17.3" stroke="#3f4d57" stroke-width="1.1"/>
<circle cx="16" cy="20.5" r="1" fill="#9bd43c"/>
</svg></td></tr>

  </table>

  <!-- pagination -->
  <div class="abs" style="left:6px;top:732px;width:1139px;height:6px;background:linear-gradient(to bottom,#f3f4f6,#fdfdfd)"></div>
  <div class="abs" style="left:20px;top:748px;width:44px;height:38px;border:1px solid #d2d2d2;border-radius:3px;background:#fff;color:#555;font-size:13px"><span style="position:absolute;left:12px;top:10px;line-height:16px">Ir a</span></div>
  <div class="abs" style="left:68px;top:750px;width:25px;height:34px;border:1px solid #e6e8ec;border-radius:3px;background:#f8f9fb;color:#555;font-size:13px"><span style="position:absolute;left:10px;top:8px;line-height:16px">:</span></div>
  <div class="abs" style="left:96px;top:754px;width:36px;height:26px;background:#fff;border-radius:5px;box-shadow:0 1px 4px rgba(120,140,160,0.10);color:#555;font-size:13.5px"><span style="position:absolute;left:10px;top:5px;line-height:16px">Ver</span></div>
  <div class="abs" style="left:139px;top:750px;width:60px;height:34px;border:1px solid #e6e8ec;border-radius:3px;background:#f8f9fb;color:#555;font-size:13.5px"><span style="position:absolute;left:14px;top:8px;line-height:16px">10</span><svg style="position:absolute;left:46px;top:13px" width="7" height="8" viewBox="0 0 7 8"><path d="M0 0.5 L7 0.5 L3.5 7.5 Z" fill="#333"/></svg></div>

  <svg class="abs" style="left:425px;top:759px" width="12" height="16" viewBox="0 0 12 16"><rect x="1" y="2" width="2.5" height="12" fill="#c8d3db"/><path d="M11 2 L4 8 L11 14 Z" fill="#c8d3db"/></svg>
  <svg class="abs" style="left:458px;top:760px" width="16" height="14" viewBox="0 0 16 14"><path d="M15 7 L2.5 7 M8 1.5 L2 7 L8 12.5" fill="none" stroke="#c8d3db" stroke-width="2.4"/></svg>
  <div class="abs" style="left:487px;top:750px;width:33px;height:34px;border-radius:50%;background:#1e90d0;color:#fff;font-size:14px;font-weight:bold;text-align:center;line-height:33px">1</div>
  <div class="abs" style="left:527px;top:757px;width:24px;height:18px;color:#7c8294;font-size:14px;font-weight:bold;text-align:center;line-height:18px">2</div>
  <div class="abs" style="left:563px;top:757px;width:24px;height:18px;color:#7c8294;font-size:14px;font-weight:bold;text-align:center;line-height:18px">3</div>
  <div class="abs" style="left:598px;top:757px;width:24px;height:18px;color:#7c8294;font-size:14px;font-weight:bold;text-align:center;line-height:18px">4</div>
  <div class="abs" style="left:634px;top:757px;width:24px;height:18px;color:#7c8294;font-size:14px;font-weight:bold;text-align:center;line-height:18px">5</div>
  <svg class="abs" style="left:674px;top:760px" width="16" height="14" viewBox="0 0 16 14"><path d="M1 7 L13.5 7 M8 1.5 L14 7 L8 12.5" fill="none" stroke="#6f7b8a" stroke-width="2.4"/></svg>
  <svg class="abs" style="left:712px;top:759px" width="12" height="16" viewBox="0 0 12 16"><rect x="8.5" y="2" width="2.5" height="12" fill="#6f7b8a"/><path d="M1 2 L8 8 L1 14 Z" fill="#6f7b8a"/></svg>

  <div class="abs" style="left:1028px;top:752px;width:98px;height:30px;background:#fff;border-radius:6px;box-shadow:0 1px 6px rgba(120,140,160,0.12);color:#555;font-size:13px"><span style="position:absolute;left:12px;top:6px;line-height:16px;white-space:nowrap">[1 a 10 de 97]</span></div>
</div>

</body></html>
